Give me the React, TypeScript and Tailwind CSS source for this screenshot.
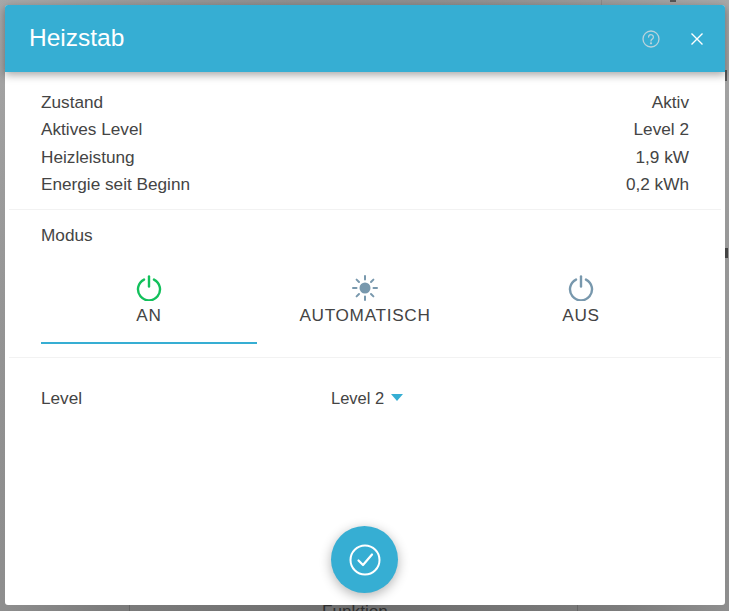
import React from 'react';

const rows = [
  ['Zustand', 'Aktiv'],
  ['Aktives Level', 'Level 2'],
  ['Heizleistung', '1,9 kW'],
  ['Energie seit Beginn', '0,2 kWh'],
];

const PowerIcon = ({ color }: { color: string }) => (
  <svg width="26" height="26" viewBox="0 0 26 26" fill="none" stroke={color} strokeWidth="2.4" strokeLinecap="round">
    <path d="M8 4.6A11 11 0 1 0 18 4.6" />
    <path d="M13 1.5V11.5" />
  </svg>
);

const SunIcon = () => (
  <svg width="26" height="26" viewBox="0 0 26 26" fill="none" stroke="#7898ad" strokeWidth="2" strokeLinecap="round">
    <circle cx="13" cy="13" r="5.5" fill="#7898ad" stroke="none" />
    <path d="M13 1V4.5M13 21.5V25M1 13H4.5M21.5 13H25M4.6 4.6L7 7M19 19L21.4 21.4M4.6 21.4L7 19M19 7L21.4 4.6" />
  </svg>
);

const tabs = [
  { label: 'AN', icon: <PowerIcon color="#13c05c" />, active: true },
  { label: 'AUTOMATISCH', icon: <SunIcon />, active: false },
  { label: 'AUS', icon: <PowerIcon color="#7898ad" />, active: false },
];

export default function App() {
  return (
    <div className="relative h-[611px] w-[729px] overflow-hidden bg-[radial-gradient(ellipse_at_50%_100%,#6c6c6c_0%,#7c7c7c_50%,#a8a8a8_100%)] p-[5px] font-['Liberation_Sans',Arial,sans-serif] text-[17.2px] text-[#444444]">
      {/* page behind the overlay */}
      <div className="absolute left-[322px] top-[599px] text-[#2e2e2e]">Funktion</div>
      <div className="absolute left-[129px] top-[605px] h-[6px] w-px bg-[#666666]" />
      <div className="absolute left-[577px] top-[605px] h-[6px] w-px bg-[#666666]" />
      <div className="absolute left-[601px] top-0 h-[5px] w-px bg-[#8a8a8a]" />
      <div className="absolute left-[670px] top-0 h-[2px] w-[6px] bg-[#555555]" />
      <div className="absolute left-[725px] top-[70px] h-[11px] w-[2px] bg-[#555555]" />
      <div className="absolute left-[725px] top-[248px] h-[10px] w-[3px] bg-[#444444]" />

      <div className="relative flex h-[600px] w-[720px] flex-col rounded-[3px] bg-white">
        <div className="flex h-[67px] items-center justify-between rounded-t-[3px] bg-[#36aed3] pl-[24px] pr-[21px] shadow-[0_3px_8px_rgba(0,0,0,0.35)]">
          <h1 className="text-[24.5px] leading-none text-white">Heizstab</h1>
          <div className="flex items-center gap-[30px]">
            <svg width="18" height="18" viewBox="0 0 18 18" fill="none" stroke="#b9d3dc" strokeWidth="1.3" strokeLinecap="round">
              <circle cx="9" cy="9" r="8" />
              <path d="M6.6 7a2.4 2.4 0 1 1 3.6 2.1c-.8.5-1.2 1-1.2 1.9" />
              <circle cx="9" cy="13.3" r="0.5" fill="#b9d3dc" />
            </svg>
            <svg width="14" height="14" viewBox="0 0 14 14" fill="none" stroke="white" strokeWidth="1.4">
              <path d="M1.5 1.5L12.5 12.5M12.5 1.5L1.5 12.5" />
            </svg>
          </div>
        </div>

        <div className="mx-[4px] flex flex-col border-b border-[#f2f2f2] px-[32px] pb-[10px] pt-[17px]">
          {rows.map(([label, value]) => (
            <div key={label} className="flex h-[27.4px] items-center justify-between">
              <span>{label}</span>
              <span>{value}</span>
            </div>
          ))}
        </div>

        <div className="mx-[4px] border-b border-[#f2f2f2] px-[32px] pb-[13px] pt-[15px]">
          <div className="leading-[20px]">Modus</div>
          <div className="mt-[17px] grid grid-cols-3">
            {tabs.map((tab) => (
              <div
                key={tab.label}
                className={`flex h-[82px] flex-col items-center border-b-2 pt-[13px] ${tab.active ? 'border-[#36aed3]' : 'border-transparent'}`}
              >
                {tab.icon}
                <span className="mt-[4px] leading-[20px] tracking-[0.7px]">{tab.label}</span>
              </div>
            ))}
          </div>
        </div>

        <div className="mx-[4px] mt-[30px] flex items-start px-[32px]">
          <span className="w-[290px] leading-[20px]">Level</span>
          <span className="text-[16.5px] leading-[20px]">Level 2</span>
          <span className="ml-[7px] mt-[6px] h-0 w-0 border-x-[6px] border-t-[7px] border-x-transparent border-t-[#36aed3]" />
        </div>

        <button className="absolute left-[326px] top-[521px] flex h-[67px] w-[67px] items-center justify-center rounded-full bg-[#36aed3] shadow-[0_3px_12px_rgba(0,0,0,0.3)]">
          <svg width="32" height="32" viewBox="0 0 32 32" fill="none" stroke="white" strokeWidth="2" strokeLinecap="round" strokeLinejoin="round">
            <circle cx="16" cy="16" r="14.5" />
            <path d="M9.5 16.5L14 21L23 10.5" strokeWidth="2.2" />
          </svg>
        </button>
      </div>
    </div>
  );
}
